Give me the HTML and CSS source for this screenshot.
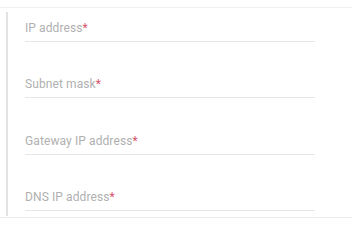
FILE: index.html
```html
<!DOCTYPE html>
<html lang="en">
<head>
    <meta charset="UTF-8">
    <meta name="viewport" content="width=device-width, initial-scale=1.0">
    <title>IP settings</title>
    <link rel="stylesheet" href="styles.css">
</head>
<body>
    <div class="panel">
        <form class="ip-form">
            <div class="field">
                <label>IP address<span class="req">*</span></label>
                <input type="text">
            </div>
            <div class="field">
                <label>Subnet mask<span class="req">*</span></label>
                <input type="text">
            </div>
            <div class="field">
                <label>Gateway IP address<span class="req">*</span></label>
                <input type="text">
            </div>
            <div class="field">
                <label>DNS IP address<span class="req">*</span></label>
                <input type="text">
            </div>
        </form>
    </div>
</body>
</html>
```

FILE: styles.css
```css
body {
    font-family: Roboto, "Liberation Sans", Arial, sans-serif;
    background: #fff;
    margin: 0;
    padding: 0;
    color: #999;
}
.panel {
    margin-top: 7px;
    border-top: 1px solid #f0f0f0;
    border-bottom: 1px solid #ececec;
    padding: 4px 0 1px 6px;
}
.ip-form {
    border-left: 2px solid #e2e2e2;
    padding: 0 37px 5px 17px;
}
.field {
    padding-top: 9px;
    margin-bottom: 26.33px;
}
.field:last-child {
    margin-bottom: 0;
}
label {
    display: block;
    font-size: 12px;
    line-height: 14px;
    letter-spacing: 0.1px;
    color: #b0b0b0;
}
.req {
    color: #d9536a;
}
input[type="text"] {
    display: block;
    width: 100%;
    box-sizing: border-box;
    border: none;
    border-bottom: 1px solid #e6e6e6;
    height: 7px;
    padding: 0;
    outline: none;
    background: transparent;
}
```
